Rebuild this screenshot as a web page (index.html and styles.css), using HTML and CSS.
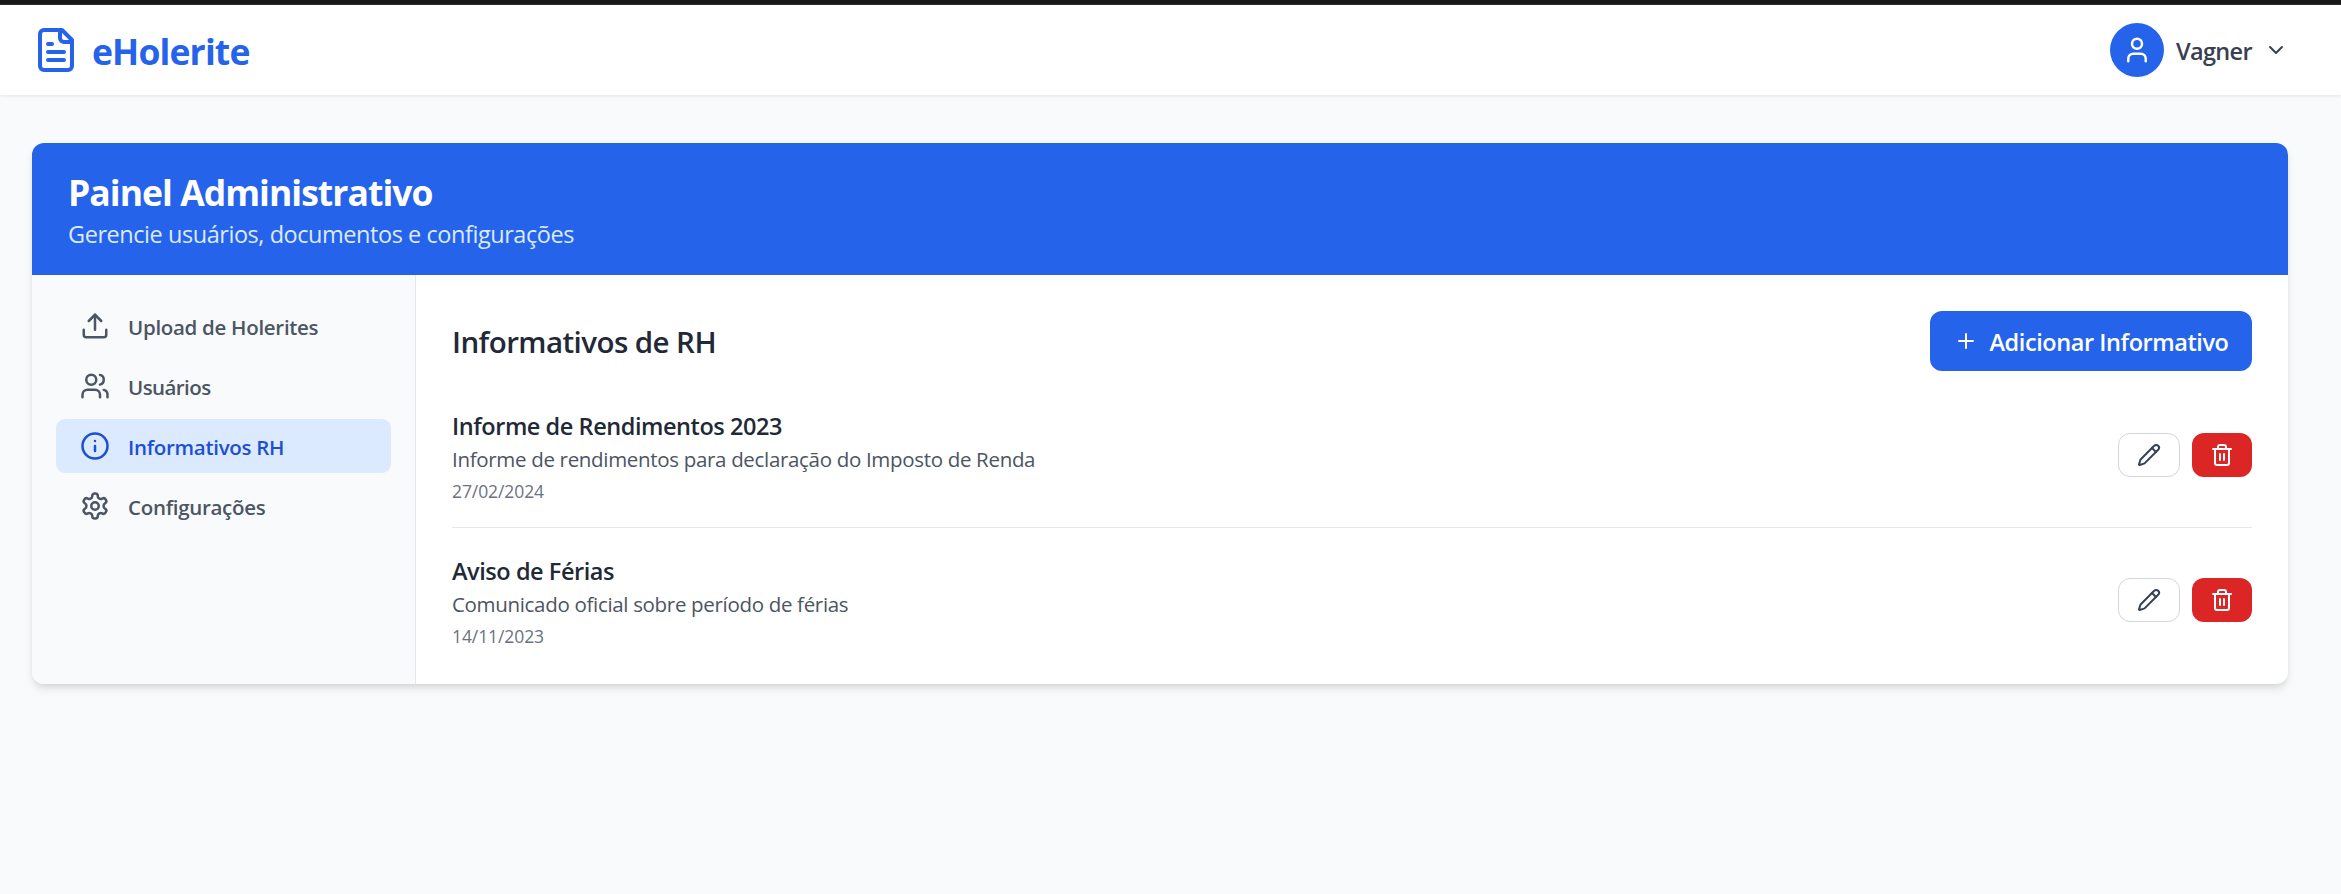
FILE: index.html
```html
<!DOCTYPE html>
<html lang="pt-BR">
<head>
<meta charset="utf-8">
<title>eHolerite</title>
<link rel="stylesheet" href="styles.css">
</head>
<body>
<div class="window-edge"></div>
<header class="topbar">
  <div class="brand">
    <svg class="icon icon-xl" viewBox="0 0 24 24"><path d="M15 2H6a2 2 0 0 0-2 2v16a2 2 0 0 0 2 2h12a2 2 0 0 0 2-2V7Z"/><path d="M14 2v4a2 2 0 0 0 2 2h4"/><path d="M10 9H8"/><path d="M16 13H8"/><path d="M16 17H8"/></svg>
    <span class="brand-name">eHolerite</span>
  </div>
  <div class="account">
    <span class="avatar"><svg class="icon icon-lg" viewBox="0 0 24 24"><path d="M19 21v-2a4 4 0 0 0-4-4H9a4 4 0 0 0-4 4v2"/><circle cx="12" cy="7" r="4"/></svg></span>
    <span class="account-name">Vagner</span>
    <svg class="icon icon-md" viewBox="0 0 24 24"><path d="m6 9 6 6 6-6"/></svg>
  </div>
</header>
<main class="panel">
  <div class="panel-head">
    <h1 class="panel-title">Painel Administrativo</h1>
    <p class="panel-sub">Gerencie usuários, documentos e configurações</p>
  </div>
  <div class="panel-body">
    <nav class="side">
      <a class="side-link"><svg class="icon icon-lg" viewBox="0 0 24 24"><path d="M21 15v4a2 2 0 0 1-2 2H5a2 2 0 0 1-2-2v-4"/><path d="m17 8-5-5-5 5"/><path d="M12 3v12"/></svg><span>Upload de Holerites</span></a>
      <a class="side-link"><svg class="icon icon-lg" viewBox="0 0 24 24"><path d="M16 21v-2a4 4 0 0 0-4-4H6a4 4 0 0 0-4 4v2"/><circle cx="9" cy="7" r="4"/><path d="M22 21v-2a4 4 0 0 0-3-3.87"/><path d="M16 3.13a4 4 0 0 1 0 7.75"/></svg><span class="tight">Usuários</span></a>
      <a class="side-link active"><svg class="icon icon-lg" viewBox="0 0 24 24"><circle cx="12" cy="12" r="10"/><path d="M12 16v-4"/><path d="M12 8h.01"/></svg><span>Informativos RH</span></a>
      <a class="side-link"><svg class="icon icon-lg" viewBox="0 0 24 24"><path d="M12.22 2h-.44a2 2 0 0 0-2 2v.18a2 2 0 0 1-1 1.73l-.43.25a2 2 0 0 1-2 0l-.15-.08a2 2 0 0 0-2.73.73l-.22.38a2 2 0 0 0 .73 2.73l.15.1a2 2 0 0 1 1 1.72v.51a2 2 0 0 1-1 1.74l-.15.09a2 2 0 0 0-.73 2.73l.22.38a2 2 0 0 0 2.73.73l.15-.08a2 2 0 0 1 2 0l.43.25a2 2 0 0 1 1 1.73V20a2 2 0 0 0 2 2h.44a2 2 0 0 0 2-2v-.18a2 2 0 0 1 1-1.73l.43-.25a2 2 0 0 1 2 0l.15.08a2 2 0 0 0 2.73-.73l.22-.39a2 2 0 0 0-.73-2.73l-.15-.08a2 2 0 0 1-1-1.74v-.5a2 2 0 0 1 1-1.74l.15-.09a2 2 0 0 0 .73-2.73l-.22-.38a2 2 0 0 0-2.73-.73l-.15.08a2 2 0 0 1-2 0l-.43-.25a2 2 0 0 1-1-1.73V4a2 2 0 0 0-2-2z"/><circle cx="12" cy="12" r="3"/></svg><span>Configurações</span></a>
    </nav>
    <section class="content">
      <div class="content-head">
        <h2 class="content-title">Informativos de RH</h2>
        <button class="btn btn-primary"><svg class="icon icon-md" viewBox="0 0 24 24"><path d="M5 12h14"/><path d="M12 5v14"/></svg><span>Adicionar Informativo</span></button>
      </div>
      <ul class="list">
        <li class="item">
          <div>
            <h3 class="item-title">Informe de Rendimentos 2023</h3>
            <p class="item-text">Informe de rendimentos para declaração do Imposto de Renda</p>
            <p class="item-date">27/02/2024</p>
          </div>
          <div class="actions">
            <button class="btn btn-outline" aria-label="Editar"><svg class="icon icon-md" viewBox="0 0 24 24"><path d="M21.174 6.812a1 1 0 0 0-3.986-3.987L3.842 16.174a2 2 0 0 0-.5.83l-1.321 4.352a.5.5 0 0 0 .623.622l4.353-1.32a2 2 0 0 0 .83-.497z"/><path d="m15 5 4 4"/></svg></button>
            <button class="btn btn-danger" aria-label="Excluir"><svg class="icon icon-md" viewBox="0 0 24 24"><path d="M3 6h18"/><path d="M19 6v14a2 2 0 0 1-2 2H7a2 2 0 0 1-2-2V6"/><path d="M8 6V4a2 2 0 0 1 2-2h4a2 2 0 0 1 2 2v2"/><path d="M10 11v6"/><path d="M14 11v6"/></svg></button>
          </div>
        </li>
        <li class="item">
          <div>
            <h3 class="item-title">Aviso de Férias</h3>
            <p class="item-text">Comunicado oficial sobre período de férias</p>
            <p class="item-date">14/11/2023</p>
          </div>
          <div class="actions">
            <button class="btn btn-outline" aria-label="Editar"><svg class="icon icon-md" viewBox="0 0 24 24"><path d="M21.174 6.812a1 1 0 0 0-3.986-3.987L3.842 16.174a2 2 0 0 0-.5.83l-1.321 4.352a.5.5 0 0 0 .623.622l4.353-1.32a2 2 0 0 0 .83-.497z"/><path d="m15 5 4 4"/></svg></button>
            <button class="btn btn-danger" aria-label="Excluir"><svg class="icon icon-md" viewBox="0 0 24 24"><path d="M3 6h18"/><path d="M19 6v14a2 2 0 0 1-2 2H7a2 2 0 0 1-2-2V6"/><path d="M8 6V4a2 2 0 0 1 2-2h4a2 2 0 0 1 2 2v2"/><path d="M10 11v6"/><path d="M14 11v6"/></svg></button>
          </div>
        </li>
      </ul>
    </section>
  </div>
</main>
</body>
</html>
```
FILE: styles.css
```css
* { box-sizing: border-box; margin: 0; padding: 0; }
body {
  min-height: 894px;
  background: #f9fafc;
  color: #1f2937;
  font-family: "Open Sans", "Noto Sans", sans-serif;
  font-size: 24px;
  line-height: 36px;
}
.icon {
  flex: none;
  display: block;
  fill: none;
  stroke: currentColor;
  stroke-width: 2;
  stroke-linecap: round;
  stroke-linejoin: round;
}
.icon-md { width: 24px; height: 24px; }
.icon-lg { width: 30px; height: 30px; }
.icon-xl { width: 48px; height: 48px; }

.window-edge { height: 5px; background: #181818; border-bottom: 1px solid #2b2b2b; }
.topbar {
  display: flex;
  align-items: center;
  justify-content: space-between;
  height: 90px;
  padding: 0 53px 0 32px;
  background: #fff;
  box-shadow: 0 1.5px 3px rgba(0, 0, 0, 0.07);
}
.brand { display: flex; align-items: center; gap: 12px; color: #2563eb; }
.brand-name { padding-top: 3px; font-size: 35.5px; font-weight: 700; letter-spacing: -0.86px; line-height: 45px; }
.account { display: flex; align-items: center; gap: 12px; color: #374151; }
.account-name { padding-top: 2px; font-size: 23.5px; font-weight: 600; letter-spacing: -0.65px; line-height: 34px; }
.avatar {
  display: flex;
  align-items: center;
  justify-content: center;
  width: 54px;
  height: 54px;
  border-radius: 50%;
  background: #2563eb;
  color: #fff;
}

.panel {
  margin: 48px 53px 0 32px;
  overflow: hidden;
  border-radius: 12px;
  background: #fff;
  box-shadow: 0 6px 9px -1.5px rgba(0, 0, 0, 0.1), 0 3px 6px -3px rgba(0, 0, 0, 0.1);
}
.panel-head { padding: 24px 36px; background: #2563eb; color: #fff; }
.panel-title { padding-top: 3px; font-size: 35.5px; font-weight: 700; letter-spacing: -0.966px; line-height: 45px; }
.panel-sub { padding-top: 2px; color: #dbeafe; font-size: 23.5px; letter-spacing: -0.446px; line-height: 34px; }
.panel-body { display: flex; }
.side {
  display: flex;
  flex-direction: column;
  gap: 6px;
  width: 384px;
  padding: 24px;
  border-right: 1px solid #e5e7eb;
  background: #f9fafb;
}
.side-link {
  display: flex;
  align-items: center;
  gap: 18px;
  height: 54px;
  padding: 0 24px;
  border-radius: 9px;
  color: #4b5563;
  font-size: 20.5px;
  font-weight: 600;
  letter-spacing: -0.3px;
  line-height: 28px;
}
.side-link span { padding-top: 2px; }
.side-link .tight { letter-spacing: -0.58px; }
.side-link.active { background: #dbeafe; color: #1d4ed8; }

.content { flex: 1; padding: 36px; }
.content-head { display: flex; align-items: center; justify-content: space-between; margin-bottom: 36px; }
.content-title { padding-top: 2px; font-size: 29.5px; font-weight: 600; letter-spacing: -0.563px; line-height: 40px; }
.btn {
  display: flex;
  align-items: center;
  justify-content: center;
  gap: 12px;
  border: 0;
  border-radius: 12px;
  font: inherit;
  font-size: 23.5px;
  font-weight: 600;
  letter-spacing: -0.428px;
  line-height: 34px;
}
.btn span { padding-top: 2px; }
.btn-primary { width: 322px; height: 60px; background: #2563eb; color: #fff; }
.btn-outline { width: 62px; height: 44px; border: 1px solid #d1d5db; background: #fff; color: #374151; }
.btn-danger { width: 60px; height: 44px; background: #dc2626; color: #fff; }
.list { list-style: none; }
.item { display: flex; align-items: center; justify-content: space-between; }
.item + .item { margin-top: 24px; padding-top: 24px; border-top: 1px solid #e5e7eb; }
.item-title { padding-top: 2px; font-size: 23.5px; font-weight: 600; letter-spacing: -0.442px; line-height: 34px; }
.item-text { padding-top: 2px; color: #4b5563; font-size: 20.5px; letter-spacing: -0.32px; line-height: 28px; }
.item-date { margin-top: 6px; color: #6b7280; font-size: 17.5px; letter-spacing: -0.089px; line-height: 24px; }
.actions { display: flex; gap: 12px; }
```
